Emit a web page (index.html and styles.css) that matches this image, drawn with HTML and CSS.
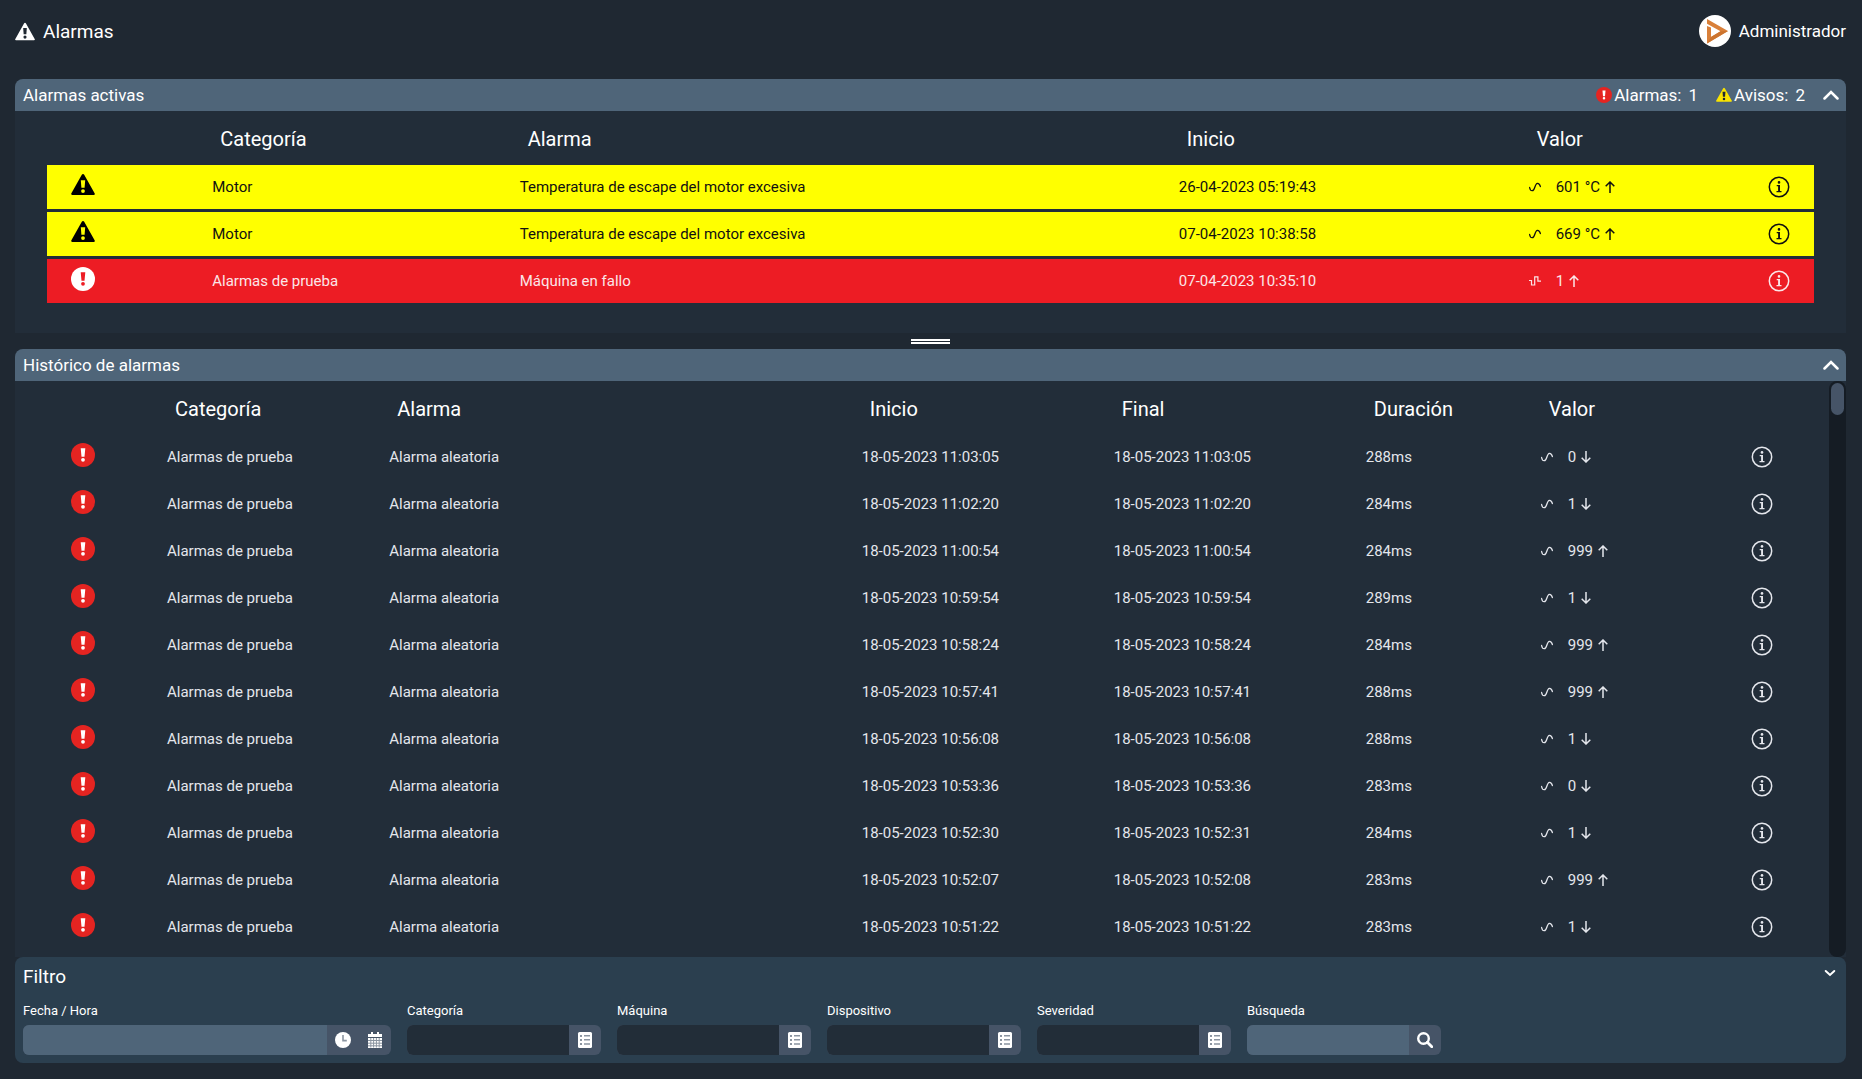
FILE: index.html
```html
<!DOCTYPE html>
<html lang="es">
<head>
<meta charset="utf-8">
<meta name="viewport" content="width=device-width, initial-scale=1">
<title>Alarmas</title>
<link rel="stylesheet" href="styles.css">
</head>
<body>
<svg class="sprite" aria-hidden="true">
  <symbol id="warning" viewBox="0 0 24 24"><path d="M12 1c-.5 0-.9.3-1.200.7L.4 20.300C-.2 21.200.3 22 1.200 22h21.600c.9 0 1.400-.8.800-1.700L13.200 1.700C12.900 1.300 12.500 1 12 1z"/><path class="bang" d="M9.800 7.200h4.400l-.6 7.600h-3.200zM12 16.200a1.900 1.900 0 1 1 0 3.800 1.900 1.900 0 0 1 0-3.800z"/></symbol>
  <symbol id="alert" viewBox="0 0 24 24"><circle cx="12" cy="12" r="12"/><path class="bang" d="M9.700 5.300h4.600l-.8 8.400h-3zM12 14.900a1.900 1.900 0 1 1 0 3.800 1.900 1.900 0 0 1 0-3.800z"/></symbol>
  <symbol id="sine" viewBox="0 0 12 12"><path d="M.6 6.500C1 8.700 2 9.800 3.300 9.700 6.300 9.500 5.500 2.600 8.400 2.300 9.800 2.200 10.800 3.300 11.400 5.500" fill="none" stroke="currentColor" stroke-width="1.300" stroke-linecap="round"/></symbol>
  <symbol id="square" viewBox="0 0 12 12"><path d="M0 5.500h2.500v4.500h3.200V1.800h3.200v4.400H12" fill="none" stroke="currentColor" stroke-width="1.200"/></symbol>
  <symbol id="up" viewBox="0 0 10 12"><path d="M5 12V1M.7 5.300 5 1l4.300 4.300" fill="none" stroke="currentColor" stroke-width="1.500"/></symbol>
  <symbol id="down" viewBox="0 0 10 12"><path d="M5 0v11M.7 6.700 5 11l4.300-4.300" fill="none" stroke="currentColor" stroke-width="1.500"/></symbol>
  <symbol id="info" viewBox="0 0 22 22"><circle cx="11" cy="11" r="9.700" fill="none" stroke="currentColor" stroke-width="1.500"/><circle cx="11" cy="6.400" r="1.300"/><path d="M8.700 9h3.300v6h1.500v1.200H8.500V15h1.600v-4.800H8.700z"/></symbol>
  <symbol id="chevron-up" viewBox="0 0 16 16"><path d="M1.500 11.500 8 5l6.500 6.500" fill="none" stroke="currentColor" stroke-width="2.500" stroke-linecap="round"/></symbol>
  <symbol id="chevron-down" viewBox="0 0 16 16"><path d="m3.700 6 4.300 4 4.300-4" fill="none" stroke="currentColor" stroke-width="2" stroke-linecap="round"/></symbol>
  <symbol id="list" viewBox="0 0 16 16"><rect x="1" width="14" height="16" rx="1.500"/><path class="cut" d="M3 3h2v2H3zM3 7h2v2H3zM3 11h2v2H3zM7 3h6v1.600H7zM7 7h6v1.600H7zM7 11.200h6v1.600H7z"/></symbol>
  <symbol id="clock" viewBox="0 0 16 16"><circle cx="8" cy="8" r="8"/><path class="cut" d="M7.200 3h1.600v4.800h3v1.600H7.200z"/></symbol>
  <symbol id="calendar" viewBox="0 0 16 16"><path d="M4 0h2v2h4V0h2v2h3v3H1V2h3zM1 6h14v10H1z"/><path class="grid" d="M1 8.500h14M1 11.200h14M1 13.800h14M3.800 6v9.500M6.600 6v9.500M9.400 6v9.500M12.200 6v9.500"/></symbol>
  <symbol id="search" viewBox="0 0 16 16"><path d="M10.300 10.300 14.800 14.800" fill="none" stroke="currentColor" stroke-width="2.800" stroke-linecap="round"/><circle cx="6.500" cy="6.500" r="5.300" fill="none" stroke="currentColor" stroke-width="2.400"/></symbol>
</svg>

<header class="topbar">
  <h1><svg class="title-icon"><use href="#warning"/></svg>Alarmas</h1>
  <div class="user">
    <svg class="avatar" viewBox="0 0 32 32"><circle cx="16" cy="16" r="16" fill="#fff"/><path d="M8 4 29 16 8 28.500V11l4 1.500V22l9.500-5.700L8 8.800z" fill="#d9803a"/><path d="m21.500 16.300 7.500-.3L8 28.500l4-6.500z" fill="#cc742f"/></svg>
    <span>Administrador</span>
  </div>
</header>

<main>
  <section class="panel">
    <div class="panel-head">
      <h2>Alarmas activas</h2>
      <div class="summary">
        <span class="count"><svg class="red"><use href="#alert"/></svg><span>Alarmas:</span><span>1</span></span>
        <span class="count"><svg class="amber"><use href="#warning"/></svg><span>Avisos:</span><span>2</span></span>
        <button class="toggle" aria-label="Contraer"><svg><use href="#chevron-up"/></svg></button>
      </div>
    </div>
    <div class="panel-body active-body">
      <table class="active">
        <colgroup><col class="a-icon"><col class="a-category"><col class="a-alarm"><col class="a-start"><col class="a-value"><col class="a-info"></colgroup>
        <thead><tr><th></th><th>Categoría</th><th>Alarma</th><th>Inicio</th><th>Valor</th><th></th></tr></thead>
        <tbody>
          <tr class="warn"><td class="state"><svg><use href="#warning"/></svg></td><td>Motor</td><td>Temperatura de escape del motor excesiva</td><td>26-04-2023 05:19:43</td><td><div class="value"><svg><use href="#sine"/></svg>601 °C<svg class="arrow"><use href="#up"/></svg></div></td><td class="more"><button aria-label="Detalle"><svg><use href="#info"/></svg></button></td></tr>
          <tr class="warn"><td class="state"><svg><use href="#warning"/></svg></td><td>Motor</td><td>Temperatura de escape del motor excesiva</td><td>07-04-2023 10:38:58</td><td><div class="value"><svg><use href="#sine"/></svg>669 °C<svg class="arrow"><use href="#up"/></svg></div></td><td class="more"><button aria-label="Detalle"><svg><use href="#info"/></svg></button></td></tr>
          <tr class="fault"><td class="state"><svg><use href="#alert"/></svg></td><td>Alarmas de prueba</td><td>Máquina en fallo</td><td>07-04-2023 10:35:10</td><td><div class="value"><svg><use href="#square"/></svg>1<svg class="arrow"><use href="#up"/></svg></div></td><td class="more"><button aria-label="Detalle"><svg><use href="#info"/></svg></button></td></tr>
        </tbody>
      </table>
    </div>
  </section>

  <div class="splitter"><span></span></div>

  <section class="panel history-panel">
    <div class="panel-head">
      <h2>Histórico de alarmas</h2>
      <button class="toggle" aria-label="Contraer"><svg><use href="#chevron-up"/></svg></button>
    </div>
    <div class="scroll-area">
      <div class="panel-body">
        <table class="history">
          <colgroup><col class="h-icon"><col class="h-category"><col class="h-alarm"><col class="h-start"><col class="h-end"><col class="h-duration"><col class="h-value"></colgroup>
          <thead><tr><th></th><th>Categoría</th><th>Alarma</th><th>Inicio</th><th>Final</th><th>Duración</th><th>Valor</th></tr></thead>
          <tbody>
            <tr><td class="state"><svg><use href="#alert"/></svg></td><td>Alarmas de prueba</td><td>Alarma aleatoria</td><td>18-05-2023 11:03:05</td><td>18-05-2023 11:03:05</td><td>288ms</td><td class="more"><div class="value"><svg><use href="#sine"/></svg>0<svg class="arrow"><use href="#down"/></svg><button aria-label="Detalle"><svg><use href="#info"/></svg></button></div></td></tr>
            <tr><td class="state"><svg><use href="#alert"/></svg></td><td>Alarmas de prueba</td><td>Alarma aleatoria</td><td>18-05-2023 11:02:20</td><td>18-05-2023 11:02:20</td><td>284ms</td><td class="more"><div class="value"><svg><use href="#sine"/></svg>1<svg class="arrow"><use href="#down"/></svg><button aria-label="Detalle"><svg><use href="#info"/></svg></button></div></td></tr>
            <tr><td class="state"><svg><use href="#alert"/></svg></td><td>Alarmas de prueba</td><td>Alarma aleatoria</td><td>18-05-2023 11:00:54</td><td>18-05-2023 11:00:54</td><td>284ms</td><td class="more"><div class="value"><svg><use href="#sine"/></svg>999<svg class="arrow"><use href="#up"/></svg><button aria-label="Detalle"><svg><use href="#info"/></svg></button></div></td></tr>
            <tr><td class="state"><svg><use href="#alert"/></svg></td><td>Alarmas de prueba</td><td>Alarma aleatoria</td><td>18-05-2023 10:59:54</td><td>18-05-2023 10:59:54</td><td>289ms</td><td class="more"><div class="value"><svg><use href="#sine"/></svg>1<svg class="arrow"><use href="#down"/></svg><button aria-label="Detalle"><svg><use href="#info"/></svg></button></div></td></tr>
            <tr><td class="state"><svg><use href="#alert"/></svg></td><td>Alarmas de prueba</td><td>Alarma aleatoria</td><td>18-05-2023 10:58:24</td><td>18-05-2023 10:58:24</td><td>284ms</td><td class="more"><div class="value"><svg><use href="#sine"/></svg>999<svg class="arrow"><use href="#up"/></svg><button aria-label="Detalle"><svg><use href="#info"/></svg></button></div></td></tr>
            <tr><td class="state"><svg><use href="#alert"/></svg></td><td>Alarmas de prueba</td><td>Alarma aleatoria</td><td>18-05-2023 10:57:41</td><td>18-05-2023 10:57:41</td><td>288ms</td><td class="more"><div class="value"><svg><use href="#sine"/></svg>999<svg class="arrow"><use href="#up"/></svg><button aria-label="Detalle"><svg><use href="#info"/></svg></button></div></td></tr>
            <tr><td class="state"><svg><use href="#alert"/></svg></td><td>Alarmas de prueba</td><td>Alarma aleatoria</td><td>18-05-2023 10:56:08</td><td>18-05-2023 10:56:08</td><td>288ms</td><td class="more"><div class="value"><svg><use href="#sine"/></svg>1<svg class="arrow"><use href="#down"/></svg><button aria-label="Detalle"><svg><use href="#info"/></svg></button></div></td></tr>
            <tr><td class="state"><svg><use href="#alert"/></svg></td><td>Alarmas de prueba</td><td>Alarma aleatoria</td><td>18-05-2023 10:53:36</td><td>18-05-2023 10:53:36</td><td>283ms</td><td class="more"><div class="value"><svg><use href="#sine"/></svg>0<svg class="arrow"><use href="#down"/></svg><button aria-label="Detalle"><svg><use href="#info"/></svg></button></div></td></tr>
            <tr><td class="state"><svg><use href="#alert"/></svg></td><td>Alarmas de prueba</td><td>Alarma aleatoria</td><td>18-05-2023 10:52:30</td><td>18-05-2023 10:52:31</td><td>284ms</td><td class="more"><div class="value"><svg><use href="#sine"/></svg>1<svg class="arrow"><use href="#down"/></svg><button aria-label="Detalle"><svg><use href="#info"/></svg></button></div></td></tr>
            <tr><td class="state"><svg><use href="#alert"/></svg></td><td>Alarmas de prueba</td><td>Alarma aleatoria</td><td>18-05-2023 10:52:07</td><td>18-05-2023 10:52:08</td><td>283ms</td><td class="more"><div class="value"><svg><use href="#sine"/></svg>999<svg class="arrow"><use href="#up"/></svg><button aria-label="Detalle"><svg><use href="#info"/></svg></button></div></td></tr>
            <tr><td class="state"><svg><use href="#alert"/></svg></td><td>Alarmas de prueba</td><td>Alarma aleatoria</td><td>18-05-2023 10:51:22</td><td>18-05-2023 10:51:22</td><td>283ms</td><td class="more"><div class="value"><svg><use href="#sine"/></svg>1<svg class="arrow"><use href="#down"/></svg><button aria-label="Detalle"><svg><use href="#info"/></svg></button></div></td></tr>
          </tbody>
        </table>
      </div>
      <div class="track"><div class="thumb"></div></div>
    </div>
  </section>

  <form class="filter">
    <div class="filter-head">
      <h2>Filtro</h2>
      <button type="button" class="toggle" aria-label="Desplegar"><svg><use href="#chevron-down"/></svg></button>
    </div>
    <div class="fields">
      <div class="field wide light"><label for="fecha">Fecha / Hora</label><div class="box"><input id="fecha" type="text"><button type="button" aria-label="Hora"><svg><use href="#clock"/></svg></button><button type="button" aria-label="Fecha"><svg><use href="#calendar"/></svg></button></div></div>
      <div class="field"><label for="categoria">Categoría</label><div class="box"><input id="categoria" type="text" readonly><button type="button" aria-label="Elegir categoría"><svg><use href="#list"/></svg></button></div></div>
      <div class="field"><label for="maquina">Máquina</label><div class="box"><input id="maquina" type="text" readonly><button type="button" aria-label="Elegir máquina"><svg><use href="#list"/></svg></button></div></div>
      <div class="field"><label for="dispositivo">Dispositivo</label><div class="box"><input id="dispositivo" type="text" readonly><button type="button" aria-label="Elegir dispositivo"><svg><use href="#list"/></svg></button></div></div>
      <div class="field"><label for="severidad">Severidad</label><div class="box"><input id="severidad" type="text" readonly><button type="button" aria-label="Elegir severidad"><svg><use href="#list"/></svg></button></div></div>
      <div class="field light"><label for="busqueda">Búsqueda</label><div class="box"><input id="busqueda" type="text"><button type="submit" aria-label="Buscar"><svg><use href="#search"/></svg></button></div></div>
    </div>
  </form>
</main>
</body>
</html>
```
FILE: styles.css
```css
* {
  box-sizing: border-box;
}

body {
  margin: 0;
  padding: 0 16px 16px 15px;
  min-height: 100vh;
  display: flex;
  flex-direction: column;
  background: #1f2832;
  color: #fff;
  font: 15px/20px Roboto, "Liberation Sans", sans-serif;
}

h1, h2 {
  margin: 0;
  font-weight: 400;
}

svg {
  display: block;
  flex: none;
  fill: currentColor;
}

button {
  display: flex;
  align-items: center;
  justify-content: center;
  padding: 0;
  border: 0;
  background: none;
  color: inherit;
  cursor: pointer;
}

.sprite {
  position: absolute;
  width: 0;
  height: 0;
}

.bang {
  fill: var(--bang, #1f2832);
}

.cut {
  fill: #8b95a1;
}

.grid {
  fill: none;
  stroke: #8b95a1;
  stroke-width: 1px;
}

/* Top bar */

.topbar {
  display: flex;
  justify-content: space-between;
  align-items: flex-start;
  height: 79px;
  padding-top: 15px;
}

.topbar h1 {
  display: flex;
  align-items: center;
  gap: 8px;
  font-size: 19px;
  line-height: 34px;
}

.title-icon {
  width: 20px;
  height: 20px;
}

.user {
  display: flex;
  align-items: center;
  gap: 8px;
  font-size: 17px;
  line-height: 32px;
}

.avatar {
  width: 32px;
  height: 32px;
}

main {
  flex: 1;
  display: flex;
  flex-direction: column;
}

/* Panels */

.panel {
  background: #222d39;
}

.panel-head {
  display: flex;
  justify-content: space-between;
  align-items: center;
  height: 32px;
  padding: 0 7px 0 8px;
  border-radius: 8px 8px 0 0;
  background: #4f6579;
}

.panel-head h2 {
  font-size: 17px;
}

.panel:first-child,
.history-panel {
  border-radius: 8px 8px 0 0;
}

.summary,
.count {
  display: flex;
  align-items: center;
}

.summary {
  gap: 18px;
  font-size: 17px;
}

.count {
  gap: 7px;
}

.count svg {
  width: 16px;
  height: 16px;
  margin-right: -5px;
}

.red {
  color: #e52421;
  --bang: #fff;
}

.amber {
  color: #f9e300;
}

.toggle svg {
  width: 16px;
  height: 16px;
}

.panel-body {
  flex: 1;
  padding: 0 32px;
}

.active-body {
  padding-bottom: 27px;
}

.splitter {
  display: flex;
  justify-content: center;
  height: 16px;
  padding-top: 6px;
}

.splitter span {
  width: 39px;
  height: 5px;
  border: solid #fff;
  border-width: 2px 0;
}

.history-panel {
  flex: 1;
  display: flex;
  flex-direction: column;
}

.scroll-area {
  flex: 1;
  display: flex;
}

.track {
  width: 17px;
  padding: 2px;
  border-radius: 8px;
  background: #151c24;
}

.thumb {
  height: 32px;
  border-radius: 8px;
  background: #465467;
}

/* Tables */

table {
  width: 100%;
  table-layout: fixed;
  border-collapse: separate;
  border-spacing: 0 3px;
}

th {
  height: 48px;
  padding: 2px 0 0 16px;
  font-size: 20px;
  font-weight: 400;
  text-align: left;
}

td {
  height: 44px;
  padding: 0 0 0 8px;
}

td.state {
  padding: 0 0 4px 24px;
}

td.more {
  padding-right: 24px;
}

.state svg {
  width: 24px;
  height: 24px;
}

.more button {
  margin-left: auto;
}

.more button svg {
  width: 22px;
  height: 22px;
}

.value {
  display: flex;
  align-items: center;
}

.value > svg {
  width: 12px;
  height: 12px;
  margin-right: 15px;
}

.value > .arrow {
  width: 10px;
  margin: 0 0 0 5px;
}

.warn {
  background: #ff0;
  color: #111;
  --bang: #ff0;
}

.fault {
  background: #ed1c24;
  color: #fbe6e8;
  --bang: #ed1c24;
}

.warn .state {
  color: #000;
}

.fault .state {
  color: #fff;
}

.history td {
  color: #e4e6ec;
}

.history td.state {
  color: #e52421;
  --bang: #fff;
}

.a-icon { width: 8.9%; }
.a-category { width: 17.4%; }
.a-alarm { width: 37.3%; }
.a-start { width: 19.8%; }
.a-value { width: 9%; }

.h-icon { width: 6.4%; }
.h-category { width: 12.7%; }
.h-alarm { width: 27%; }
.h-start { width: 14.4%; }
.h-end { width: 14.4%; }
.h-duration { width: 10%; }

/* Filter */

.filter {
  padding: 8px;
  border-radius: 8px;
  background: #2b3f4f;
}

.filter-head {
  display: flex;
  justify-content: space-between;
  align-items: flex-start;
}

.filter-head h2 {
  font-size: 19px;
  line-height: 24px;
}

.fields {
  display: flex;
  flex-wrap: wrap;
  gap: 16px;
  padding-top: 12px;
}

.field {
  width: 194px;
}

.field.wide {
  width: 368px;
}

.field label {
  display: block;
  padding-bottom: 4px;
  font-size: 13px;
}

.box {
  display: flex;
  height: 30px;
  overflow: hidden;
  border-radius: 6px;
  background: #465467;
}

.box input {
  flex: 1;
  min-width: 0;
  padding: 0 8px;
  border: 0;
  background: #222d38;
  color: #fff;
  font: inherit;
}

.light input {
  background: #4f6579;
}

.box button {
  width: 32px;
}

.box svg {
  width: 16px;
  height: 16px;
}
```
